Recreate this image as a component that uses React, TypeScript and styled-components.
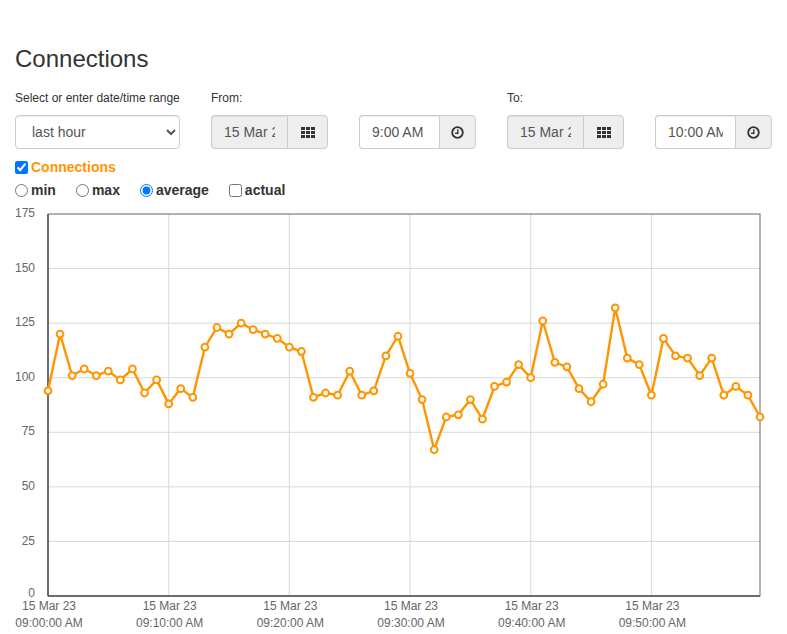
import React from "react";
import styled, { createGlobalStyle } from "styled-components";

const GlobalStyle = createGlobalStyle`
  html, body { margin: 0; padding: 0; background: #fff; }
  body {
    font-family: "Liberation Sans", Arial, Helvetica, sans-serif;
    font-size: 14px;
    color: #333;
  }
  * { box-sizing: border-box; }
`;

const Page = styled.div`
  padding: 46px 15px 0 15px;
  width: 787px;
  height: 634px;
  overflow: hidden;
`;

const Title = styled.h3`
  margin: 0;
  font-size: 24px;
  font-weight: 400;
  line-height: 26px;
  color: #333;
`;

const FormRow = styled.div`
  display: flex;
  gap: 31px;
  margin-top: 18px;
`;

const Field = styled.div<{ $w: number }>`
  display: flex;
  flex-direction: column;
  width: ${(p) => p.$w}px;
`;

const FieldLabel = styled.label`
  font-size: 12px;
  line-height: 17px;
  height: 17px;
  margin-bottom: 8px;
  color: #333;
  white-space: nowrap;
`;

const Select = styled.select`
  height: 34px;
  width: 100%;
  padding: 6px 12px;
  font-family: inherit;
  font-size: 14px;
  color: #555;
  background: #fff;
  border: 1px solid #ccc;
  border-radius: 4px;
  box-shadow: inset 0 1px 1px rgba(0, 0, 0, 0.075);
`;

const Group = styled.div`
  display: flex;
  height: 34px;
`;

const GroupInput = styled.input<{ $w: number; $ro?: boolean }>`
  width: ${(p) => p.$w}px;
  height: 34px;
  padding: 6px 12px;
  font-family: inherit;
  font-size: 14px;
  color: #555;
  background: ${(p) => (p.$ro ? "#eee" : "#fff")};
  border: 1px solid #ccc;
  border-right: none;
  border-radius: 4px 0 0 4px;
  box-shadow: inset 0 1px 1px rgba(0, 0, 0, 0.075);
  outline: none;
`;

const Addon = styled.span<{ $w: number }>`
  width: ${(p) => p.$w}px;
  height: 34px;
  display: flex;
  align-items: center;
  justify-content: center;
  background: #eee;
  border: 1px solid #ccc;
  border-radius: 0 4px 4px 0;
  color: #333;
`;

const CheckRow = styled.div`
  display: flex;
  align-items: center;
  height: 20px;
  margin-top: 8px;
`;

const OptionRow = styled.div`
  display: flex;
  align-items: center;
  gap: 20px;
  height: 20px;
  margin-top: 3px;
`;

const Option = styled.label<{ $color?: string }>`
  display: inline-flex;
  align-items: center;
  font-weight: 700;
  font-size: 14px;
  color: ${(p) => p.$color || "#333"};
  input {
    margin: 0 3px 0 0;
    width: 13px;
    height: 13px;
  }
`;

const ChartWrap = styled.div`
  margin: 4px -15px 0 -15px;
  svg {
    display: block;
    font-family: "Liberation Sans", Arial, sans-serif;
  }
`;

const GridIcon = () => (
  <svg width="14" height="11" viewBox="0 0 14 11">
    {[0, 1, 2].map((r) =>
      [0, 1, 2].map((c) => (
        <rect key={`${r}-${c}`} x={c * 5} y={r * 4} width="4" height="3" fill="#333" />
      ))
    )}
  </svg>
);

const ClockIcon = () => (
  <svg width="13" height="13" viewBox="0 0 13 13">
    <circle cx="6.5" cy="6.5" r="5.3" fill="none" stroke="#333" strokeWidth="1.8" />
    <path d="M6.8 3.2 V7.2 H4.2" fill="none" stroke="#333" strokeWidth="1.4" />
  </svg>
);

const values = [
  94, 120, 101, 104, 101, 103, 99, 104, 93, 99,
  88, 95, 91, 114, 123, 120, 125, 122, 120, 118,
  114, 112, 91, 93, 92, 103, 92, 94, 110, 119,
  102, 90, 67, 82, 83, 90, 81, 96, 98, 106,
  100, 126, 107, 105, 95, 89, 97, 132, 109, 106,
  92, 118, 110, 109, 101, 109, 92, 96, 92, 82,
];

const L = 48;
const R = 760;
const T = 10;
const B = 392;
const yOf = (v: number) => B - (v / 175) * (B - T);
const xOf = (i: number) => L + (i * (R - L)) / 59;

const Chart = () => {
  const yTicks = [0, 25, 50, 75, 100, 125, 150, 175];
  const xTicks = [0, 10, 20, 30, 40, 50];
  const pts = values.map((v, i) => `${xOf(i).toFixed(1)},${yOf(v).toFixed(1)}`).join(" ");
  return (
    <svg width="787" height="431" viewBox="0 0 787 431">
      {yTicks.map((t) => (
        <g key={t}>
          {t > 0 && t < 175 && (
            <line x1={L} x2={R} y1={yOf(t)} y2={yOf(t)} stroke="#d9d9d9" strokeWidth="1" />
          )}
          <text
            x={35}
            y={yOf(t) + (t === 0 ? -2 : 0)}
            textAnchor="end"
            dominantBaseline="middle"
            fontSize="12"
            fill="#666"
          >
            {t}
          </text>
        </g>
      ))}
      {xTicks.map((m) => {
        const x = xOf(m);
        const mm = String(m).padStart(2, "0");
        return (
          <g key={m}>
            {m > 0 && <line x1={x} x2={x} y1={T} y2={B} stroke="#d9d9d9" strokeWidth="1" />}
            <text x={x + 1} y={403} textAnchor="middle" dominantBaseline="middle" fontSize="12" fill="#666">
              15 Mar 23
            </text>
            <text x={x + 1} y={420} textAnchor="middle" dominantBaseline="middle" fontSize="12" fill="#666">
              {`09:${mm}:00 AM`}
            </text>
          </g>
        );
      })}
      <rect x={L} y={T} width={R - L} height={B - T} fill="none" stroke="#666" strokeWidth="1" />
      <line x1={L} x2={L} y1={T} y2={B} stroke="#555" strokeWidth="1.5" />
      <line x1={L} x2={R} y1={B} y2={B} stroke="#555" strokeWidth="1.5" />
      <polyline points={pts} fill="none" stroke="#ff9500" strokeWidth="2.4" strokeLinejoin="round" />
      {values.map((v, i) => (
        <circle key={i} cx={xOf(i)} cy={yOf(v)} r="3.4" fill="#fff" stroke="#ff9500" strokeWidth="2" />
      ))}
    </svg>
  );
};

export default function App() {
  return (
    <>
      <GlobalStyle />
      <Page>
        <Title>Connections</Title>
        <FormRow>
          <Field $w={167}>
            <FieldLabel>Select or enter date/time range</FieldLabel>
            <Select defaultValue="last hour">
              <option>last hour</option>
              <option>last day</option>
              <option>last week</option>
            </Select>
          </Field>
          <Field $w={117}>
            <FieldLabel>From:</FieldLabel>
            <Group>
              <GroupInput $w={76} $ro readOnly value="15 Mar 23" />
              <Addon $w={41}>
                <GridIcon />
              </Addon>
            </Group>
          </Field>
          <Field $w={117}>
            <FieldLabel>&nbsp;</FieldLabel>
            <Group>
              <GroupInput $w={80} readOnly value="9:00 AM" />
              <Addon $w={37}>
                <ClockIcon />
              </Addon>
            </Group>
          </Field>
          <Field $w={117}>
            <FieldLabel>To:</FieldLabel>
            <Group>
              <GroupInput $w={76} $ro readOnly value="15 Mar 23" />
              <Addon $w={41}>
                <GridIcon />
              </Addon>
            </Group>
          </Field>
          <Field $w={117}>
            <FieldLabel>&nbsp;</FieldLabel>
            <Group>
              <GroupInput $w={80} readOnly value="10:00 AM" />
              <Addon $w={37}>
                <ClockIcon />
              </Addon>
            </Group>
          </Field>
        </FormRow>
        <CheckRow>
          <Option $color="#ff9500">
            <input type="checkbox" defaultChecked />
            Connections
          </Option>
        </CheckRow>
        <OptionRow>
          <Option>
            <input type="radio" name="agg" />
            min
          </Option>
          <Option>
            <input type="radio" name="agg" />
            max
          </Option>
          <Option>
            <input type="radio" name="agg" defaultChecked />
            average
          </Option>
          <Option>
            <input type="checkbox" />
            actual
          </Option>
        </OptionRow>
        <ChartWrap>
          <Chart />
        </ChartWrap>
      </Page>
    </>
  );
}
